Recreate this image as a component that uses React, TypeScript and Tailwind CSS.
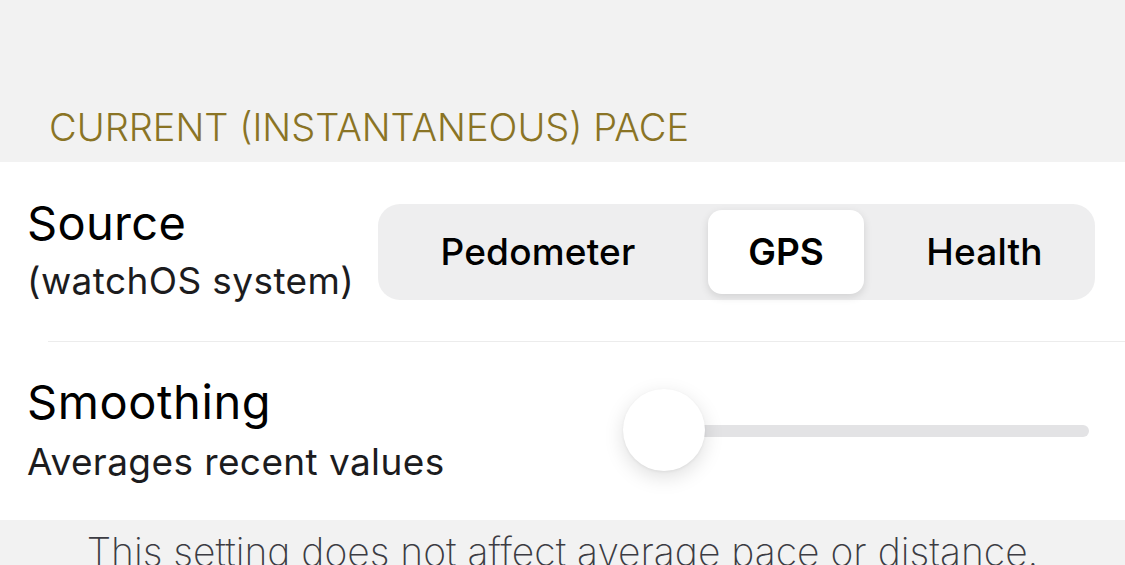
import React from "react";

export default function App() {
  return (
    <div
      className="w-[1125px] h-[565px] overflow-hidden bg-[#f2f2f2] flex flex-col"
      style={{ fontFamily: "Inter, Roboto, 'Noto Sans', sans-serif" }}
    >
      <div className="h-[162px] shrink-0 flex items-end pl-[49px] pb-[16px]">
        <div className="text-[38px] leading-none font-light text-[#8a7425]">
          CURRENT (INSTANTANEOUS) PACE
        </div>
      </div>
      <div className="bg-white shrink-0 flex flex-col">
        <div className="h-[179px] flex items-center pl-[27px] pr-[30px] justify-between">
          <div className="flex flex-col mt-[-4px]">
            <div className="text-[47px] leading-[52px] tracking-[0.3px] text-black">Source</div>
            <div className="text-[37px] leading-[44px] tracking-[0.4px] text-[#1c1c1e] mt-[10px]">(watchOS system)</div>
          </div>
          <div className="w-[717px] h-[96px] rounded-[22px] bg-[#eeeeef] flex items-center px-[6px] gap-[16px]">
            <div className="w-[308px] h-[84px] flex items-center justify-center text-[37px] font-[470] tracking-[0.2px] text-black">
              Pedometer
            </div>
            <div className="w-[156px] h-[84px] bg-white rounded-[14px] shadow-[0_3px_8px_rgba(0,0,0,0.12)] flex items-center justify-center text-[37px] font-semibold text-black">
              GPS
            </div>
            <div className="w-[209px] h-[84px] flex items-center justify-center text-[37px] font-[470] tracking-[0.2px] text-black">
              Health
            </div>
          </div>
        </div>
        <div className="ml-[48px] h-[1px] bg-[#ececec]" />
        <div className="h-[178px] flex items-center pl-[27px] pr-[36px] justify-between">
          <div className="flex flex-col mt-[-2px]">
            <div className="text-[47px] leading-[52px] tracking-[0.6px] text-black">Smoothing</div>
            <div className="text-[37px] leading-[44px] tracking-[0.4px] text-[#1c1c1e] mt-[12px]">Averages recent values</div>
          </div>
          <div className="relative w-[466px] h-[84px] flex items-center">
            <div className="ml-[40px] flex-1 h-[12px] rounded-full bg-[#e3e3e5]" />
            <div className="absolute left-0 top-0 w-[82px] h-[82px] rounded-full bg-white shadow-[0_6px_20px_rgba(0,0,0,0.13),0_1px_3px_rgba(0,0,0,0.06)]" />
          </div>
        </div>
      </div>
      <div className="flex justify-center pt-[12px]">
        <div className="text-[39px] leading-none font-extralight text-[#3c3c43]">
          This setting does not affect average pace or distance.
        </div>
      </div>
    </div>
  );
}
